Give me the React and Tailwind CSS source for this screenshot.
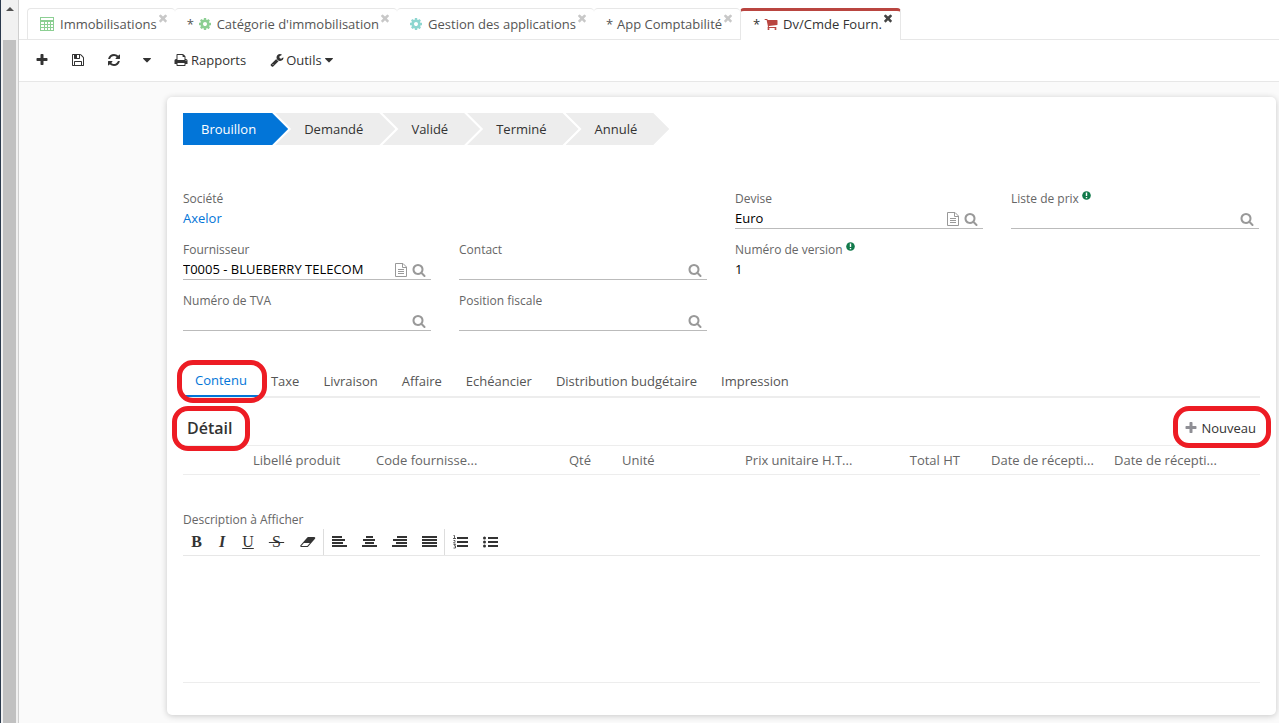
import { useState } from "react";
import clsx from "clsx";

const ICONS = {
  plus: "M1600 736v192q0 40-28 68t-68 28h-416v416q0 40-28 68t-68 28h-192q-40 0-68-28t-28-68v-416h-416q-40 0-68-28t-28-68v-192q0-40 28-68t68-28h416v-416q0-40 28-68t68-28h192q40 0 68 28t28 68v416h416q40 0 68 28t28 68z",
  search:
    "M1216 832q0-185-131.5-316.5t-316.5-131.5-316.5 131.5-131.5 316.5 131.5 316.5 316.5 131.5 316.5-131.5 131.5-316.5zm512 832q0 52-38 90t-90 38q-54 0-90-38l-343-342q-179 124-399 124-143 0-273.5-55.5t-225-150-150-225-55.5-273.5 55.5-273.5 150-225 225-150 273.5-55.5 273.5 55.5 225 150 150 225 55.5 273.5q0 220-124 399l343 343q37 37 37 90z",
  close:
    "M1490 1322q0 40-28 68l-136 136q-28 28-68 28t-68-28l-294-294-294 294q-28 28-68 28t-68-28l-136-136q-28-28-28-68t28-68l294-294-294-294q-28-28-28-68t28-68l136-136q28-28 68-28t68 28l294 294 294-294q28-28 68-28t68 28l136 136q28 28 28 68t-28 68l-294 294 294 294q28 28 28 68z",
  save: "M512 1536h768v-384h-768v384zm896 0h128v-896q0-14-10-38.5t-20-34.5l-281-281q-10-10-34-20t-39-10v416q0 40-28 68t-68 28h-576q-40 0-68-28t-28-68v-416h-128v1280h128v-416q0-40 28-68t68-28h832q40 0 68 28t28 68v416zm-384-928v-320q0-13-9.5-22.5t-22.5-9.5h-192q-13 0-22.5 9.5t-9.5 22.5v320q0 13 9.5 22.5t22.5 9.5h192q13 0 22.5-9.5t9.5-22.5zm640 32v928q0 40-28 68t-68 28h-1344q-40 0-68-28t-28-68v-1344q0-40 28-68t68-28h928q40 0 88 20t76 48l280 280q28 28 48 76t20 88z",
  refresh:
    "M1639 1056q0 5-1 7-64 268-268 434.5t-478 166.5q-146 0-282.5-55t-243.5-157l-129 129q-19 19-45 19t-45-19-19-45v-448q0-26 19-45t45-19h448q26 0 45 19t19 45-19 45l-137 137q71 66 161 102t187 36q134 0 250-65t186-179q11-17 53-117 8-23 30-23h192q13 0 22.5 9.5t9.5 22.5zm25-800v448q0 26-19 45t-45 19h-448q-26 0-45-19t-19-45 19-45l138-138q-148-137-349-137-134 0-250 65t-186 179q-11 17-53 117-8 23-30 23h-199q-13 0-22.5-9.5t-9.5-22.5v-7q65-268 270-434.5t480-166.5q146 0 284 55.5t245 156.5l130-129q19-19 45-19t45 19 19 45z",
  print:
    "M448 1536h896v-256h-896v256zm0-640h896v-384h-160q-40 0-68-28t-28-68v-160h-640v640zm1152 64q0-26-19-45t-45-19-45 19-19 45 19 45 45 19 45-19 19-45zm128 0v416q0 13-9.5 22.5t-22.5 9.5h-224v160q0 40-28 68t-68 28h-960q-40 0-68-28t-28-68v-160h-224q-13 0-22.5-9.5t-9.5-22.5v-416q0-79 56.5-135.5t135.5-56.5h64v-544q0-40 28-68t68-28h672q40 0 88 20t76 48l152 152q28 28 48 76t20 88v256h64q79 0 135.5 56.5t56.5 135.5z",
  wrench:
    "M448 1472q0-26-19-45t-45-19-45 19-19 45 19 45 45 19 45-19 19-45zm644-420l-682 682q-37 37-90 37-52 0-91-37l-106-108q-38-36-38-90 0-53 38-91l681-681q39 98 114.5 173.5t173.5 114.5zm634-435q0 39-23 106-47 134-164.5 217.5t-258.5 83.5q-185 0-316.5-131.5t-131.5-316.5 131.5-316.5 316.5-131.5q58 0 121.5 16.5t107.5 46.5q16 11 16 28t-16 28l-293 169v224l193 107q5-3 79-48.5t135.5-81 70.5-35.5q15 0 23.5 10t8.5 25z",
  cog: "M1152 896q0-106-75-181t-181-75-181 75-75 181 75 181 181 75 181-75 75-181zm512-109v222q0 12-8 23t-20 13l-185 28q-19 54-39 91 35 50 107 138 10 12 10 25t-9 23q-27 37-99 108t-94 71q-12 0-26-9l-138-108q-44 23-91 38-16 136-29 186-7 28-36 28h-222q-14 0-24.5-8.5t-11.5-21.5l-28-184q-49-16-90-37l-141 107q-10 9-25 9-14 0-25-11-126-114-165-168-7-10-7-23 0-12 8-23 15-21 51-66.5t54-70.5q-27-50-41-99l-183-27q-13-2-21-12.5t-8-23.5v-222q0-12 8-23t19-13l186-28q14-46 39-92-40-57-107-138-10-12-10-24 0-10 9-23 26-36 98.5-107.5t94.5-71.5q13 0 26 10l138 107q44-23 91-38 16-136 29-186 7-28 36-28h222q14 0 24.5 8.5t11.5 21.5l28 184q49 16 90 37l142-107q9-9 24-9 13 0 25 10 129 119 165 170 7 8 7 22 0 12-8 23-15 21-51 66.5t-54 70.5q26 50 41 98l183 28q13 2 21 12.5t8 23.5z",
  cart: "M704 1536q0 52-38 90t-90 38-90-38-38-90 38-90 90-38 90 38 38 90zm896 0q0 52-38 90t-90 38-90-38-38-90 38-90 90-38 90 38 38 90zm128-1088v512q0 24-16.5 42.5t-40.5 21.5l-1044 122q13 60 13 70 0 16-24 64h920q26 0 45 19t19 45-19 45-45 19h-1024q-26 0-45-19t-19-45q0-11 8-31.5t16-36 21.5-40 15.5-29.5l-177-823h-204q-26 0-45-19t-19-45 19-45 45-19h256q16 0 28.5 6.5t19.5 15.5 13 24.5 8 26 5.5 29.5 4.5 26h1201q26 0 45 19t19 45z",
  eraser: "M832 1408l336-384h-768l-336 384h768zm1013-1077q15 34 9.500 71.500t-30.500 65.500l-896 1024q-38 44-96 44h-768q-38 0-69.500-20.500t-47.500-54.500q-15-34-9.500-71.500t30.500-65.500l896-1024q38-44 96-44h768q38 0 69.500 20.500t47.500 54.500z",
  caret: "M1408 704q0 26-19 45l-448 448q-19 19-45 19t-45-19l-448-448q-19-19-19-45t19-45 45-19h896q26 0 45 19t19 45z",
};

function Icon({ name, className, viewBox = "0 0 1792 1792" }) {
  return (
    <svg viewBox={viewBox} className={clsx("shrink-0 fill-current", className)} aria-hidden="true">
      <path d={ICONS[name]} />
    </svg>
  );
}

function TableIcon({ className }) {
  return (
    <svg viewBox="0 0 14 14" className={clsx("shrink-0", className)} fill="none" stroke="currentColor" aria-hidden="true">
      <rect x="0.5" y="0.5" width="13" height="13" />
      <path d="M0 3.500h14M0 4.500h14M0 7.500h14M0 10.500h14M4.500 4.500v9M7.500 4.500v9M10.500 4.500v9" />
    </svg>
  );
}

function FileIcon() {
  return (
    <svg viewBox="0 0 12 14" className="h-3.5 w-3 shrink-0" fill="none" stroke="currentColor" aria-hidden="true">
      <path d="M0.500 0.500h7.500l3.500 3.500v9.500h-11zM7.500 0.500v4h4M3 6.500h6M3 8.500h6M3 10.500h6" />
    </svg>
  );
}

function LinesIcon({ lines, children }) {
  return (
    <svg viewBox="0 0 15 14" className="h-3.5 w-[15px]" fill="currentColor" aria-hidden="true">
      {lines.map(([x, y, w]) => (
        <rect key={y} x={x} y={y} width={w} height="2" />
      ))}
      {children}
    </svg>
  );
}

const TABS = [
  { title: "Immobilisations", icon: "table", color: "text-[#8ccf93]" },
  { title: "Catégorie d'immobilisation", icon: "cog", color: "text-[#8ccf93]", dirty: true },
  { title: "Gestion des applications", icon: "cog", color: "text-[#8dd6d0]" },
  { title: "App Comptabilité", dirty: true },
  { title: "Dv/Cmde Fourn.", icon: "cart", color: "text-[#b94540]", dirty: true, active: true },
];

const STEPS = ["Brouillon", "Demandé", "Validé", "Terminé", "Annulé"];

const PANELS = ["Contenu", "Taxe", "Livraison", "Affaire", "Echéancier", "Distribution budgétaire", "Impression"];

const COLUMNS = [
  { title: "Libellé produit" },
  { title: "Code fournisse..." },
  { title: "Qté", numeric: true },
  { title: "Unité" },
  { title: "Prix unitaire H.T..." },
  { title: "Total HT", numeric: true },
  { title: "Date de récepti..." },
  { title: "Date de récepti..." },
];

function Scrollbar() {
  return (
    <div className="flex w-[19px] shrink-0 flex-col border-r border-l border-r-[#cfcfcf] border-l-[#2b3a4d] bg-[#f1f1f1]">
      <div className="flex h-10 justify-center pt-[7px]">
        <svg viewBox="0 0 8 4" className="h-1 w-2" aria-hidden="true">
          <path d="M4 0l4 4h-8z" fill="#505050" />
        </svg>
      </div>
      <div className="mr-0.5 ml-0.5 grow bg-[#c1c1c1]" />
    </div>
  );
}

function NavTab({ tab }) {
  return (
    <div
      className={clsx(
        "flex h-8 rounded-t-sm bg-white pr-[6px] pl-3",
        tab.active
          ? "border-t-[3px] border-r border-l border-t-[#b94540] border-r-[#e7e7e7] border-l-[#e7e7e7] text-[#333]"
          : "border-t border-b border-[#e7e7e7] text-[#555] first:border-l"
      )}
    >
      <button type="button" className={clsx("flex items-center gap-[5px]", tab.active && "pb-[3px]")}>
        {tab.dirty && <span className="w-1.5">*</span>}
        {tab.icon === "table" && <TableIcon className={clsx("mr-px size-3.5", tab.color)} />}
        {tab.icon && tab.icon !== "table" && <Icon name={tab.icon} className={clsx("size-3.5", tab.color)} />}
        <span>{tab.title}</span>
      </button>
      <button
        type="button"
        aria-label="Fermer"
        className={clsx("h-3 self-start", tab.active ? "mt-px text-[#444]" : "mt-[3px] text-[#c8c8c8]")}
      >
        <Icon name="close" className="size-3" />
      </button>
    </div>
  );
}

function ToolBar() {
  return (
    <div className="flex h-[42px] items-center border-b border-[#e7e7e7] bg-white pb-0.5 pl-4 text-[#333]">
      <button type="button" aria-label="Nouveau" className="w-9">
        <Icon name="plus" className="size-3.5" />
      </button>
      <button type="button" aria-label="Enregistrer" className="w-9">
        <Icon name="save" className="size-3.5" />
      </button>
      <button type="button" aria-label="Actualiser" className="w-[33px]">
        <Icon name="refresh" className="size-3.5" />
      </button>
      <button type="button" aria-label="Plus" className="w-[34px]">
        <Icon name="caret" className="size-3.5" />
      </button>
      <button type="button" className="flex items-center gap-[3px]">
        <Icon name="print" className="size-3.5" />
        Rapports
      </button>
      <button type="button" className="ml-6 flex items-center gap-0.5">
        <Icon name="wrench" className="size-3.5" />
        Outils
        <Icon name="caret" className="-ml-0.5 size-3.5" />
      </button>
    </div>
  );
}

function Steps() {
  return (
    <div className="flex h-8">
      {STEPS.map((step, i) => (
        <button
          key={step}
          type="button"
          className={clsx(
            "pr-8",
            i === 0
              ? "bg-[#0275d8] pl-[18px] text-white [clip-path:polygon(0_0,calc(100%_-_16px)_0,100%_50%,calc(100%_-_16px)_100%,0_100%)]"
              : "-ml-[13px] bg-[#ededed] pl-[29px] [clip-path:polygon(0_0,calc(100%_-_16px)_0,100%_50%,calc(100%_-_16px)_100%,0_100%,16px_50%)]"
          )}
        >
          {step}
        </button>
      ))}
    </div>
  );
}

function HelpMark() {
  return (
    <svg viewBox="0 0 9 9" className="mt-px ml-[3px] size-[9px]" aria-hidden="true">
      <circle cx="4.500" cy="4.500" r="4.300" fill="#127a4b" />
      <path d="M4.500 1.600v3.300M4.500 5.900v1.300" stroke="#fff" strokeWidth="1.400" />
    </svg>
  );
}

function Label({ id, help, children }) {
  return (
    <label htmlFor={id} className="flex h-[18px] text-xs leading-[18px] text-[#666]">
      {children}
      {help && <HelpMark />}
    </label>
  );
}

function RelationField({ id, label, value = "", editable, help, className }) {
  return (
    <div className={className}>
      <Label id={id} help={help}>
        {label}
      </Label>
      <div className="flex h-[21px] items-center border-b border-[#bbb] pr-[5px] text-[#999]">
        <input id={id} type="text" defaultValue={value} className="h-5 min-w-0 grow text-black outline-none" />
        {editable && (
          <button type="button" aria-label={`Ouvrir ${label}`} className="mr-[5px] pt-0.5">
            <FileIcon />
          </button>
        )}
        <button type="button" aria-label={`Rechercher ${label}`} className="pt-0.5">
          <Icon name="search" className="size-3.5" />
        </button>
      </div>
    </div>
  );
}

function Fields() {
  return (
    <div className="mt-[45px] grid grid-cols-4 gap-x-7 gap-y-3 pr-px">
      <div>
        <span className="block h-[18px] text-xs leading-[18px] text-[#666]">Société</span>
        <a href="#societe" className="leading-5 text-[#0275d8]">
          Axelor
        </a>
      </div>
      <RelationField id="devise" label="Devise" value="Euro" editable className="col-start-3" />
      <RelationField id="liste-prix" label="Liste de prix" help />
      <RelationField id="fournisseur" label="Fournisseur" value="T0005 - BLUEBERRY TELECOM" editable />
      <RelationField id="contact" label="Contact" />
      <div>
        <Label id="version" help>
          Numéro de version
        </Label>
        <output id="version" className="block leading-5 text-black">
          1
        </output>
      </div>
      <RelationField id="tva" label="Numéro de TVA" className="col-start-1" />
      <RelationField id="position" label="Position fiscale" />
    </div>
  );
}

function Highlight({ className }) {
  return <span className={clsx("pointer-events-none absolute rounded-[16px] border-[5px] border-[#ed1c24]", className)} />;
}

function PanelTabs() {
  const [current, setCurrent] = useState("Contenu");

  return (
    <div className="mt-[33px] flex h-[34px] border-b-2 border-[#ededed]">
      {PANELS.map((panel) => (
        <div key={panel} className="relative flex">
          <button
            type="button"
            onClick={() => setCurrent(panel)}
            className={clsx(
              "-mb-px px-3",
              panel === current ? "border-b-2 border-[#0275d8] font-medium text-[#0275d8]" : "text-[#555]"
            )}
          >
            {panel}
          </button>
          {panel === "Contenu" && <Highlight className="-top-1 -right-2 -bottom-[7px] -left-1.5" />}
        </div>
      ))}
    </div>
  );
}

function Lines() {
  return (
    <section>
      <div className="flex h-12 items-start justify-between border-b border-[#ededed] px-1 pt-5">
        <h2 className="relative text-base leading-5 font-semibold">
          Détail
          <Highlight className="-top-3 -right-[18px] -bottom-[13px] -left-[15px]" />
        </h2>
        <button type="button" className="relative flex items-center gap-[3px] leading-5 text-[#333]">
          <Icon name="plus" className="size-3.5 text-[#8f8f95]" />
          Nouveau
          <Highlight className="-top-3 -right-[15px] -bottom-2.5 -left-[11px]" />
        </button>
      </div>
      <table className="w-full table-fixed text-[#666]">
        <thead>
          <tr className="h-7 border-b border-[#ededed]">
            <td className="w-[65px]" />
            {COLUMNS.map((col, i) => (
              <th
                key={i}
                scope="col"
                className={clsx("font-normal whitespace-nowrap", col.numeric ? "pr-[26px] text-right" : "pl-[5px] text-left")}
              >
                {col.title}
              </th>
            ))}
            <td className="w-7" />
          </tr>
        </thead>
      </table>
    </section>
  );
}

function EditorButton({ label, className, children }) {
  return (
    <button type="button" aria-label={label} className={clsx("flex h-[26px] items-center justify-center", className)}>
      {children}
    </button>
  );
}

function Editor() {
  return (
    <section className="mt-9">
      <Label id="description">Description à Afficher</Label>
      <div className="flex h-[27px] items-start border-b border-[#e7e7e7] text-[#333]">
        <div className="flex border-r border-[#ddd] pl-0.5 font-['Liberation_Serif',serif] text-base">
          <EditorButton label="Gras" className="w-[23px] font-bold">
            B
          </EditorButton>
          <EditorButton label="Italique" className="w-7 font-bold italic">
            I
          </EditorButton>
          <EditorButton label="Souligné" className="w-6 underline">
            U
          </EditorButton>
          <EditorButton label="Barré" className="w-[33px]">
            <s className="px-0.5">&thinsp;S&thinsp;</s>
          </EditorButton>
          <EditorButton label="Effacer" className="w-[30px]">
            <Icon name="eraser" viewBox="-64 0 1984 1792" className="h-3.5 w-4" />
          </EditorButton>
        </div>
        <div className="flex border-r border-[#ddd]">
          <EditorButton label="Aligner à gauche" className="w-[30px]">
            <LinesIcon lines={[[0, 1, 10], [0, 4, 13], [0, 7, 11], [0, 10, 15]]} />
          </EditorButton>
          <EditorButton label="Centrer" className="w-[30px]">
            <LinesIcon lines={[[4, 1, 7], [1, 4, 12], [3, 7, 9], [0, 10, 15]]} />
          </EditorButton>
          <EditorButton label="Aligner à droite" className="w-[30px]">
            <LinesIcon lines={[[5, 1, 10], [1, 4, 14], [4, 7, 11], [0, 10, 15]]} />
          </EditorButton>
          <EditorButton label="Justifier" className="w-[30px]">
            <LinesIcon lines={[[0, 1, 15], [0, 4, 15], [0, 7, 15], [0, 10, 15]]} />
          </EditorButton>
        </div>
        <div className="flex">
          <EditorButton label="Liste numérotée" className="w-[30px]">
            <LinesIcon lines={[[4, 2, 11], [4, 6, 11], [4, 10, 11]]}>
              <path
                d="M0.500 0.500h1v3M0 3.500h3M0.500 5.500h1.500v1l-1.500 1.500h2M0.500 9.500h2l-1 1.500h1v2h-2"
                fill="none"
                stroke="currentColor"
                strokeWidth="0.800"
              />
            </LinesIcon>
          </EditorButton>
          <EditorButton label="Liste à puces" className="w-[30px]">
            <LinesIcon lines={[[5, 2, 10], [5, 6, 10], [5, 10, 10]]}>
              <circle cx="1.500" cy="3" r="1.500" />
              <circle cx="1.500" cy="7" r="1.500" />
              <circle cx="1.500" cy="11" r="1.500" />
            </LinesIcon>
          </EditorButton>
        </div>
      </div>
      <textarea id="description" className="block h-[127px] w-full resize-none border-b border-[#ededed] outline-none" />
    </section>
  );
}

export default function App() {
  return (
    <div className="flex min-h-screen bg-[#fafafa] font-['Open_Sans',sans-serif] text-[13px] leading-5 text-[#333]">
      <Scrollbar />
      <div className="flex min-w-0 grow flex-col">
        <nav className="flex h-10 items-start border-b border-[#e7e7e7] bg-white pt-2 pl-2">
          {TABS.map((tab) => (
            <NavTab key={tab.title} tab={tab} />
          ))}
        </nav>
        <ToolBar />
        <main className="mt-[15px] mr-[3px] mb-2 ml-[148px] rounded-[5px] bg-white px-4 pt-4 pb-8 shadow-[0_1px_6px_rgba(0,0,0,0.2)]">
          <Steps />
          <Fields />
          <PanelTabs />
          <Lines />
          <Editor />
        </main>
      </div>
    </div>
  );
}
